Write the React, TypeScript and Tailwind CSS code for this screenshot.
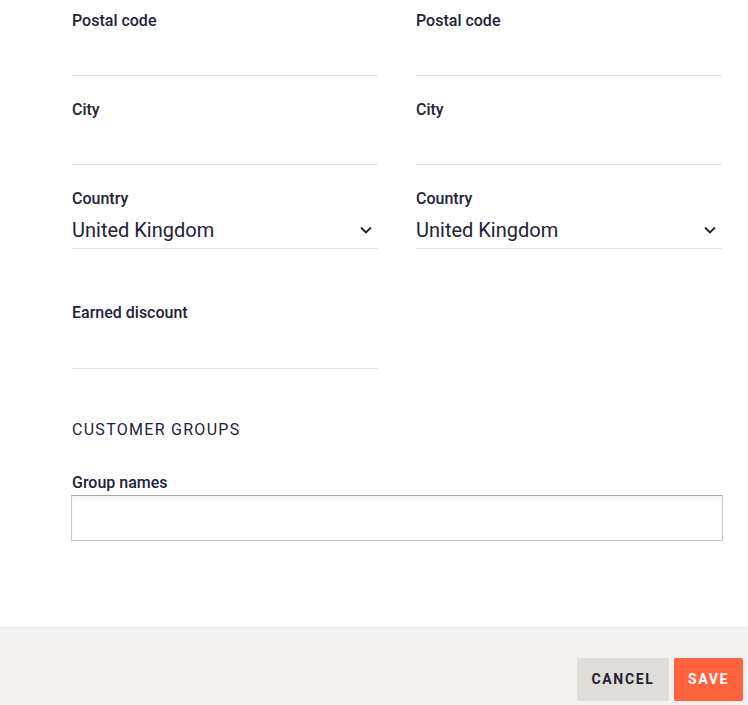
const LABEL = 'block text-[16px] leading-[22px] font-medium text-[#1e2238]';

function TextField({ label }: { label: string }) {
  return (
    <div className="flex flex-col">
      <label className={LABEL}>{label}</label>
      <div className="h-[44px] border-b border-[#e3dfe8]" />
    </div>
  );
}

function CountryField() {
  return (
    <div className="flex flex-col">
      <label className={LABEL}>Country</label>
      <div className="flex h-[39px] items-center justify-between border-b border-[#e3dfe8] pr-[6px]">
        <span className="mb-[4px] self-end text-[20px] leading-[28px] text-[#1e2238]">United Kingdom</span>
        <svg width="12" height="8" viewBox="0 0 12 8" fill="none" className="mt-[2px]">
          <path d="M1 1.5 6 6.5 11 1.5" stroke="#1e2238" strokeWidth="1.8" />
        </svg>
      </div>
    </div>
  );
}

export default function App() {
  return (
    <div className="min-h-[705px] bg-white font-['Roboto','Liberation_Sans',sans-serif]">
      <div className="pl-[72px] pr-[26px] pt-[10px] pb-[86px]">
        <div className="grid grid-cols-2 gap-x-[38px] gap-y-[23px]">
          <TextField label="Postal code" />
          <TextField label="Postal code" />
          <TextField label="City" />
          <TextField label="City" />
          <CountryField />
          <CountryField />
        </div>

        <div className="mt-[53px] flex w-[306px] flex-col">
          <label className={LABEL}>Earned discount</label>
          <div className="h-[45px] border-b border-[#e3dfe8]" />
        </div>

        <h2 className="mt-[49px] text-[16px] leading-[24px] font-normal uppercase tracking-[0.08em] text-[#1e2238]">
          Customer groups
        </h2>

        <div className="mt-[30px]">
          <label className={LABEL}>Group names</label>
          <div className="mx-[-1px] mt-[1px] h-[46px] border border-[#c9c9c9] border-t-[#a9a9a9] bg-white shadow-[inset_0_3px_5px_rgba(0,0,0,0.05)]" />
        </div>
      </div>

      <div className="flex h-[78px] justify-end gap-[5px] border-t border-[#e8e6e2] bg-[#f3f2f0] pt-[30px] pr-[5px]">
        <button className="h-[43px] w-[92px] rounded-[2px] bg-[#dfddd7] text-[14px] font-bold uppercase tracking-[0.12em] text-[#1e2238]">
          Cancel
        </button>
        <button className="h-[43px] w-[69px] rounded-[2px] bg-[#ff643c] text-[14px] font-bold uppercase tracking-[0.12em] text-white">
          Save
        </button>
      </div>
    </div>
  );
}
